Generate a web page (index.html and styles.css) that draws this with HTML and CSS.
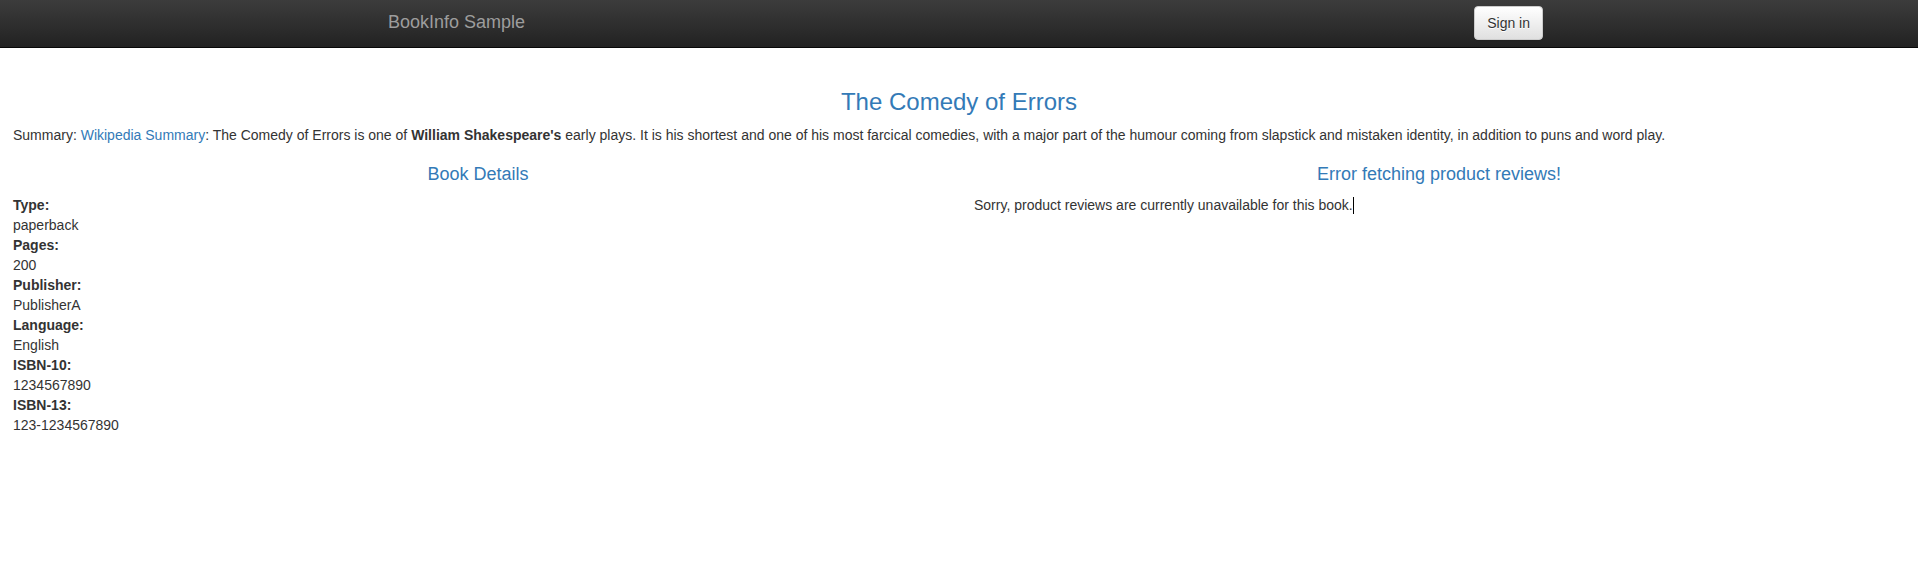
FILE: index.html
```html
<!DOCTYPE html>
<html lang="en">
<head>
<meta charset="utf-8">
<title>Simple Bookstore App</title>
<link rel="stylesheet" href="styles.css">
</head>
<body>
<nav class="navbar">
  <div class="nav-container">
    <a class="brand" href="#">BookInfo Sample</a>
    <button type="button" class="btn">Sign in</button>
  </div>
</nav>
<main class="page">
  <h3 class="title">The Comedy of Errors</h3>
  <p class="summary">Summary: <a href="#" class="link">Wikipedia Summary</a>: The Comedy of Errors is one of <b>William Shakespeare's</b> early plays. It is his shortest and one of his most farcical comedies, with a major part of the humour coming from slapstick and mistaken identity, in addition to puns and word play.</p>
  <div class="row">
    <section class="col">
      <h4 class="subtitle">Book Details</h4>
      <dl class="details">
        <dt>Type:</dt><dd>paperback</dd>
        <dt>Pages:</dt><dd>200</dd>
        <dt>Publisher:</dt><dd>PublisherA</dd>
        <dt>Language:</dt><dd>English</dd>
        <dt>ISBN-10:</dt><dd>1234567890</dd>
        <dt>ISBN-13:</dt><dd>123-1234567890</dd>
      </dl>
    </section>
    <section class="col col-right">
      <h4 class="subtitle">Error fetching product reviews!</h4>
      <p class="message">Sorry, product reviews are currently unavailable for this book.<span class="caret"></span></p>
    </section>
  </div>
</main>
</body>
</html>
```
FILE: styles.css
```css
* { box-sizing: border-box; }
html, body {
  margin: 0;
  padding: 0;
  background: #fff;
}
body {
  font-family: "Liberation Sans", Arial, Helvetica, sans-serif;
  font-size: 14px;
  line-height: 20px;
  color: #333;
}
.navbar {
  height: 48px;
  background-image: linear-gradient(to bottom, #3c3c3c 0, #222 100%);
  border-bottom: 1px solid #080808;
}
.nav-container {
  width: 1170px;
  margin: 0 auto;
  padding: 0 15px 0 14px;
  display: flex;
  justify-content: space-between;
  align-items: flex-start;
}
.brand {
  display: block;
  padding: 12px 0 15px 0;
  font-size: 18px;
  line-height: 20px;
  color: #9d9d9d;
  text-decoration: none;
}
.btn {
  margin-top: 6px;
  margin-right: -14px;
  height: 34px;
  padding: 6px 12px;
  font-family: inherit;
  font-size: 14px;
  line-height: 20px;
  color: #333;
  background-image: linear-gradient(to bottom, #fff 0, #e0e0e0 100%);
  border: 1px solid #ccc;
  border-radius: 4px;
  text-shadow: 0 1px 0 #fff;
  box-shadow: inset 0 1px 0 rgba(255,255,255,.15), 0 1px 1px rgba(0,0,0,.075);
  cursor: pointer;
}
.page {
  padding-top: 21px;
}
.title {
  margin: 20px 0 10px;
  padding: 0 13px;
  font-size: 24px;
  line-height: 1.1;
  font-weight: 500;
  color: #337ab7;
  text-align: center;
}
.summary {
  margin: 0 0 10px;
  padding: 0 13px;
}
.link {
  color: #337ab7;
  text-decoration: none;
}
.row {
  display: grid;
  grid-template-columns: 1fr 1fr;
}
.col {
  padding: 0 16px 0 13px;
}
.col-right {
  padding: 0 14px 0 15px;
}
.subtitle {
  margin: 10px 0 10px;
  font-size: 18px;
  line-height: 1.1;
  font-weight: 500;
  color: #337ab7;
  text-align: center;
}
.details {
  margin: 0 0 20px;
}
.details dt {
  font-weight: bold;
}
.details dd {
  margin: 0;
}
.message {
  margin: 0 0 10px;
}
.caret {
  display: inline-block;
  width: 1px;
  height: 17px;
  background: #000;
  vertical-align: -4px;
}
```
